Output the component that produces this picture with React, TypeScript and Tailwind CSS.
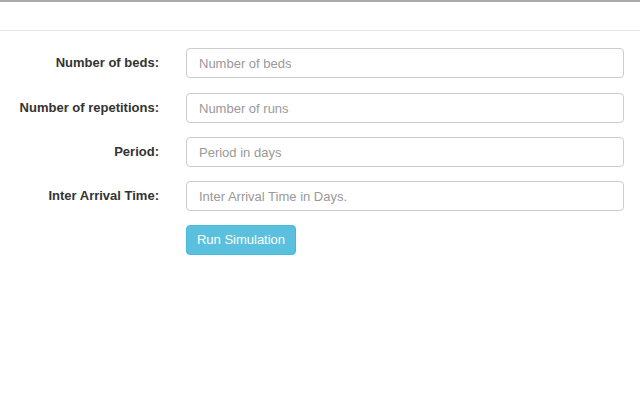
import React from "react";

const rows = [
  { label: "Number of beds:", ph: "Number of beds" },
  { label: "Number of repetitions:", ph: "Number of runs" },
  { label: "Period:", ph: "Period in days" },
  { label: "Inter Arrival Time:", ph: "Inter Arrival Time in Days." },
];

export default function App() {
  return (
    <div className="w-[640px] h-[402px] bg-white overflow-hidden" style={{ fontFamily: '"Liberation Sans", Arial, sans-serif' }}>
      <div className="h-[2px] bg-[#a9a9a9]" />
      <div className="h-[29px] border-b border-[#e3e3e3] bg-white" />
      <div className="pt-[17px] flex flex-col gap-[14px]">
        {rows.map((r, i) => (
          <div key={r.label} className={i === 0 ? "flex items-center mb-[1px]" : "flex items-center"}>
            <label className="w-[159px] text-right text-[13px] font-bold text-[#333]">{r.label}</label>
            <input
              placeholder={r.ph}
              className="ml-[27px] w-[438px] h-[30px] px-[12px] text-[13px] text-[#555] border border-[#ccc] rounded-[4px] placeholder:text-[#999] outline-none"
            />
          </div>
        ))}
        <div className="flex">
          <button className="ml-[186px] w-[110px] h-[30px] bg-[#5bc0de] border border-[#46b8da] rounded-[4px] text-white text-[13px]">
            Run Simulation
          </button>
        </div>
      </div>
    </div>
  );
}
